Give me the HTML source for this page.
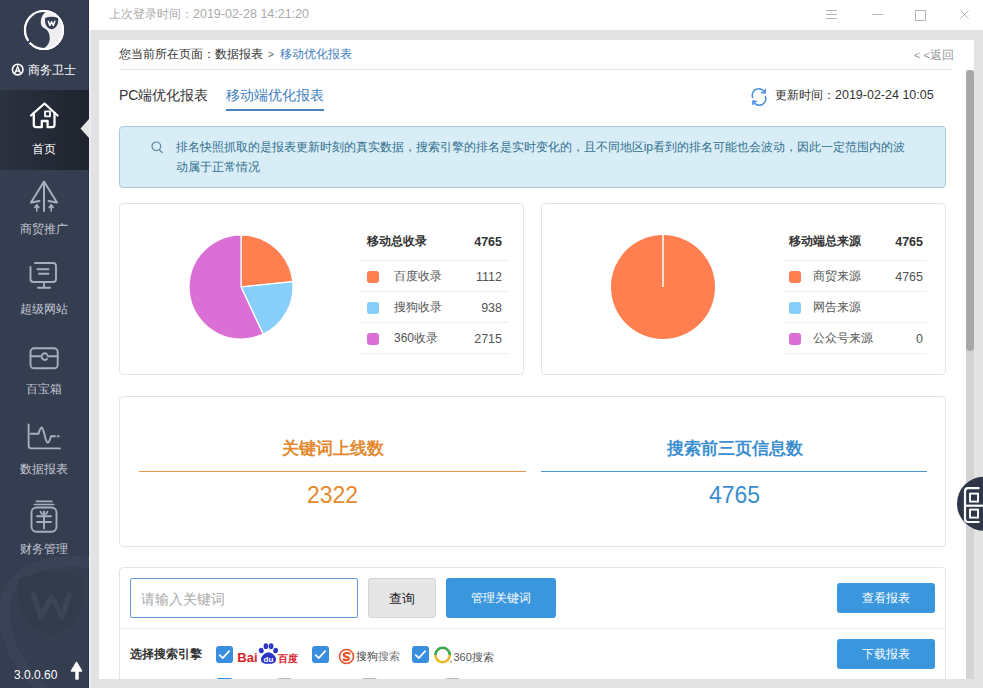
<!DOCTYPE html>
<html><head><meta charset="utf-8">
<style>
*{margin:0;padding:0;box-sizing:border-box}
html,body{width:983px;height:688px;overflow:hidden;background:#e3e3e3;font-family:"Liberation Sans",sans-serif;color:#333;position:relative}
.abs{position:absolute}
#side{left:0;top:0;width:89px;height:688px;background:#353d50;border-right:1px solid #2f3441}
#topbar{left:89px;top:0;width:894px;height:30px;background:#fff}
#strip{left:89px;top:30px;width:2px;height:658px;background:#e9ecf3}
#panel{left:99px;top:40px;width:875px;height:639px;background:#fff;overflow:hidden}
.nav{position:absolute;left:0;width:89px;height:80px;text-align:center}
.nav .t{position:absolute;left:0;width:89px;top:52px;font-size:12px;line-height:14px;color:#c9ced8}
.nav svg{position:absolute;left:29px;top:10px}
.txt{position:absolute;white-space:nowrap;line-height:1}
.card{position:absolute;border:1px solid #e5e5e5;border-radius:4px;background:#fff}
.row{position:absolute;left:0;width:148px;height:31px;border-top:1px solid #eee}
.sq{position:absolute;left:7px;top:10px;width:12px;height:12px;border-radius:3px}
.lbl{position:absolute;left:34px;top:8px;font-size:12px;color:#555;line-height:14px}
.num{position:absolute;right:6px;top:9px;color:#555;line-height:14px}
.dg{font-size:12.5px}
.btn{position:absolute;border-radius:3px;text-align:center;color:#fff;background:#3598dc}
.cb{position:absolute;width:17px;height:17px;border-radius:3px;background:#3a8ee0}
</style></head><body>
<div id="side" class="abs">
<svg class="abs" style="left:0;top:0" width="89" height="90" viewBox="0 0 89 90">
 <circle cx="44" cy="30" r="20.1" fill="#efeff2"/>
 <circle cx="44" cy="30" r="19.1" fill="none" stroke="#fff" stroke-width="2"/>
 <path d="M45.5 11.95 A18.1 18.1 0 1 0 44 48.1 C52.5 43.5 51 31 44 28 C39.5 26 39.5 17 45.5 11.95 Z" fill="#353d50"/>
 <path d="M31.5 39.8 L26.2 43.8" stroke="#353d50" stroke-width="2.3"/>
 <path d="M45.2 18 Q51.6 15.6 58 18 C59 23.5 56.5 28.5 51.6 29.2 C46.7 28.5 44.2 23.5 45.2 18 Z" fill="#353d50"/>
 <path d="M48.2 20.8 L49.9 25.5 L51.6 21.8 L53.3 25.5 L55 20.8" fill="none" stroke="#fff" stroke-width="1.5" stroke-linejoin="round"/>
 <circle cx="17.7" cy="69.6" r="5.3" fill="none" stroke="#fff" stroke-width="1.6"/>
 <path d="M15.1 73 L17.7 66.4 L20.3 73 M16.1 71 L19.3 71" fill="none" stroke="#fff" stroke-width="1.4"/>
</svg>
<div class="txt" style="left:28px;top:63.5px;font-size:12px;color:#fff">商务卫士</div>
<div class="abs" style="left:0;top:90px;width:89px;height:80px;background:linear-gradient(to right,#2b3240,#1f232e)"></div>
<svg class="abs" style="left:80px;top:119px" width="9" height="19"><path d="M9 0 L0.5 9.5 L9 19Z" fill="#e4e4e4"/></svg>
<svg class="abs" style="left:0;top:90px" width="89" height="490" viewBox="0 90 89 490" fill="none" stroke-linecap="round" stroke-linejoin="round">
 <g stroke="#fff" stroke-width="2.3">
  <path d="M31 115.5 L44.5 103.5 L57.5 115.5"/>
  <path d="M33.8 113 V124.8 Q33.8 127.2 36.2 127.2 H41.8 V121 H47.6 V127.2 H52.1 Q54.5 127.2 54.5 124.8 V113"/>
  <rect x="45" y="111.3" width="5" height="5" stroke-width="1.8"/>
 </g>
 <g stroke="#a7afbe" stroke-width="2">
  <path d="M39.5 201 L31 202.5 L44 181.5 L57 202.5 L48.5 201"/>
  <path d="M44 184 V211"/>
  <path d="M36.8 206 V211 M34.8 207.5 L36.8 204.8 L38.8 207.5 M51.2 206 V211 M49.2 207.5 L51.2 204.8 L53.2 207.5" stroke-width="1.6"/>
 </g>
 <g stroke="#a7afbe" stroke-width="1.9">
  <path d="M35 263 H53 Q56 263 56 266 V279 Q56 282 53 282 H33.5 Q30.5 282 30.5 279 V267"/>
  <path d="M37.5 269.3 H48.5 M39 273.8 H48.5 M44 282.5 V287.5 M38 287.8 H50"/>
 </g>
 <g stroke="#a7afbe" stroke-width="1.9">
  <rect x="30.5" y="348.3" width="27.2" height="20" rx="3.5"/>
  <path d="M30.5 356.3 H40 M47.5 356.3 H57.7"/>
  <path d="M47 354.3 A3.2 3.2 0 1 0 47 359"/>
 </g>
 <g stroke="#a7afbe" stroke-width="1.9">
  <path d="M28.6 424.5 V445.5 Q28.6 448.4 31.5 448.4 H60"/>
  <path d="M30.5 433.8 H38.5 Q40.5 427 41.8 427.5 Q43 428 45.5 438.5 Q46.8 443 48 442.5 Q49.5 442 51 436.3 H55"/>
  <path d="M57.6 436.3 H58.6"/>
 </g>
 <g stroke="#a7afbe" stroke-width="1.9">
  <path d="M36.4 501.4 H52 M34.4 504.5 H53.8" stroke-width="1.6"/>
  <rect x="31.5" y="507.5" width="25" height="24.3" rx="5"/>
  <path d="M37 516.2 H51 M37 522 H51 M44 511.5 V528.5 M40.5 511.8 L42 514 M47.5 511.8 L46 514"/>
 </g>
</svg>
<div class="txt" style="left:-0.5px;width:89px;text-align:center;top:142.5px;font-size:12px;color:#fff">首页</div>
<div class="txt" style="left:-0.5px;width:89px;text-align:center;top:222.5px;font-size:12px;color:#c3c8d2">商贸推广</div>
<div class="txt" style="left:-0.5px;width:89px;text-align:center;top:302.5px;font-size:12px;color:#c3c8d2">超级网站</div>
<div class="txt" style="left:-0.5px;width:89px;text-align:center;top:382.5px;font-size:12px;color:#c3c8d2">百宝箱</div>
<div class="txt" style="left:-0.5px;width:89px;text-align:center;top:462.5px;font-size:12px;color:#c3c8d2">数据报表</div>
<div class="txt" style="left:-0.5px;width:89px;text-align:center;top:542.5px;font-size:12px;color:#c3c8d2">财务管理</div>
<svg class="abs" style="left:0;top:554px" width="89" height="134" viewBox="0 554 89 134">
 <path d="M95 563 C60 558 14 562 5 602 C1 632 15 665 45 692" fill="none" stroke="#3a4256" stroke-width="11"/>
 <path d="M18.3 580 Q50 564 82.8 580 V598 Q81 624 50.5 636 Q20 624 18.3 598 Z" fill="#323a4c"/>
 <path d="M33 592.5 L41 617 L51.5 597 L62 617 L70 592.5" fill="none" stroke="#3c4457" stroke-width="5.5" stroke-linejoin="round"/>
 <path d="M76 679 V671 H71.5 L76.5 662.5 L81.5 671 H78 V679 Z" fill="#fff" stroke="#fff" stroke-width="1.5" stroke-linejoin="round"/>
</svg>
<div class="txt" style="left:14px;top:669px;font-size:12px;color:#fff">3.0.0.60</div>
</div>
<div id="topbar" class="abs">
<div class="txt" style="left:20px;top:8px;font-size:12px;color:#aaa">上次登录时间：<span class="dg">2019-02-28 14:21:20</span></div>
<svg class="abs" style="left:735px;top:8px" width="150" height="15" fill="none" stroke="#b5b5b5" stroke-width="1">
 <path d="M2 2.5 H13 M2 6.5 H13 M2 10.5 H13"/>
 <path d="M48 6.5 H59"/>
</svg>
<svg class="abs" style="left:820px;top:8px" width="74" height="15" fill="none" stroke="#b5b5b5" stroke-width="1">
 <rect x="6.5" y="2.5" width="10" height="10"/>
 <path d="M51.5 2.5 L59.5 10.5 M59.5 2.5 L51.5 10.5"/>
</svg>
</div>
<div id="strip" class="abs"></div>
<div id="panel" class="abs">
<div class="txt" style="left:20px;top:8px;font-size:12px;color:#333">您当前所在页面：数据报表<span style="font-size:10px;color:#666;margin:0 6.5px 0 5px">&gt;</span><span style="color:#3f7ec0">移动优化报表</span></div>
<div class="txt" style="right:20px;top:9px;font-size:12px;color:#999"><span style="font-size:11px">&lt; &lt;</span>返回</div>
<div class="abs" style="left:20px;top:29px;width:834px;height:1px;background:#e6e6e6"></div>
<div class="abs" style="left:867px;top:30px;width:8px;height:609px;background:#d4d4d4"></div>
<div class="abs" style="left:867px;top:30px;width:8px;height:281px;background:#a7a7a7;border-radius:4px"></div>
<div class="txt" style="left:20px;top:48px;font-size:14px;color:#333">PC端优化报表</div>
<div class="txt" style="left:127px;top:48px;font-size:14px;color:#3f7ec0">移动端优化报表</div>
<div class="abs" style="left:127px;top:69px;width:98px;height:2px;background:#4a80c0"></div>
<svg class="abs" style="left:652px;top:47.5px" width="18" height="18" viewBox="0 0 18 18" fill="none" stroke="#4a90e0" stroke-width="1.5" stroke-linecap="round" stroke-linejoin="round">
 <path d="M1.6 9.6 A6.6 6.6 0 0 1 13.8 4.6"/><path d="M14.4 8.4 A6.6 6.6 0 0 1 2.2 13.4"/>
 <path d="M14.2 1.6 L13.9 4.9 L10.6 4.5"/><path d="M1.8 16.4 L2.1 13.1 L5.4 13.5"/>
</svg>
<div class="txt" style="left:676px;top:49px;font-size:12px;color:#333">更新时间：<span class="dg">2019-02-24 10:05</span></div>
<div class="abs" style="left:20px;top:86px;width:827px;height:62px;background:#d9edf7;border:1px solid #a8cbdc;border-radius:4px"></div>
<svg class="abs" style="left:52px;top:101px" width="13" height="13" viewBox="0 0 13 13" fill="none" stroke="#5d8699" stroke-width="1.2"><circle cx="5.3" cy="5.3" r="4.3"/><path d="M8.4 8.6 L11.5 12"/></svg>
<div class="abs" style="left:76.7px;top:97px;width:738px;font-size:12px;line-height:20px;color:#31708f">排名快照抓取的是报表更新时刻的真实数据，搜索引擎的排名是实时变化的，且不同地区ip看到的排名可能也会波动，因此一定范围内的波动属于正常情况</div>

<div class="card" style="left:20px;top:163px;width:405px;height:172px">
<svg class="abs" style="left:61px;top:22.5px" width="120" height="120"><path d="M60 60 L60.00 8.00 A52 52 0 0 1 111.72 54.58 Z" fill="#ff7f50" stroke="#fff" stroke-width="1.2" stroke-linejoin="round"/><path d="M60 60 L111.72 54.58 A52 52 0 0 1 82.08 107.08 Z" fill="#87cefa" stroke="#fff" stroke-width="1.2" stroke-linejoin="round"/><path d="M60 60 L82.08 107.08 A52 52 0 1 1 60.00 8.00 Z" fill="#da70d6" stroke="#fff" stroke-width="1.2" stroke-linejoin="round"/></svg>
<div class="abs" style="left:240px;top:0;width:148px;height:172px">
 <div class="txt" style="left:7px;top:31px;font-size:12px;font-weight:bold;color:#333">移动总收录</div>
 <div class="txt dg" style="right:6px;top:32px;font-weight:bold;color:#333">4765</div>
 <div class="row" style="top:56px;width:148px"><div class="sq" style="left:7px;top:9.5px;background:#ff7f50"></div><div class="lbl" style="left:34px">百度收录</div><div class="num dg" style="right:6px">1112</div></div>
 <div class="row" style="top:87px;width:148px"><div class="sq" style="left:7px;top:9.5px;background:#87cefa"></div><div class="lbl" style="left:34px">搜狗收录</div><div class="num dg" style="right:6px">938</div></div>
 <div class="row" style="top:118px;width:148px"><div class="sq" style="left:7px;top:9.5px;background:#da70d6"></div><div class="lbl" style="left:34px">360收录</div><div class="num dg" style="right:6px">2715</div></div>
 <div class="row" style="top:149px;height:1px;width:148px"></div>
</div>
</div>
<div class="card" style="left:442px;top:163px;width:405px;height:172px">
<svg class="abs" style="left:61px;top:22.5px" width="120" height="120"><circle cx="60" cy="60" r="52" fill="#ff7f50"/><path d="M60 60 V8" stroke="#fff" stroke-width="1.5"/></svg>
<div class="abs" style="left:242px;top:0;width:143px;height:172px">
 <div class="txt" style="left:5px;top:31px;font-size:12px;font-weight:bold;color:#333">移动端总来源</div>
 <div class="txt dg" style="right:4px;top:32px;font-weight:bold;color:#333">4765</div>
 <div class="row" style="top:56px;width:143px"><div class="sq" style="left:5px;top:9.5px;background:#ff7f50"></div><div class="lbl" style="left:29px">商贸来源</div><div class="num dg" style="right:4px">4765</div></div>
 <div class="row" style="top:87px;width:143px"><div class="sq" style="left:5px;top:9.5px;background:#87cefa"></div><div class="lbl" style="left:29px">网告来源</div></div>
 <div class="row" style="top:118px;width:143px"><div class="sq" style="left:5px;top:9.5px;background:#da70d6"></div><div class="lbl" style="left:29px">公众号来源</div><div class="num dg" style="right:4px">0</div></div>
 <div class="row" style="top:149px;height:1px;width:143px"></div>
</div>
</div>
<div class="card" style="left:20px;top:356px;width:827px;height:151px">
 <div class="txt" style="left:19px;width:387px;text-align:center;top:43px;font-size:16.5px;font-weight:bold;color:#e4892f">关键词上线数</div>
 <div class="abs" style="left:19px;top:74px;width:387px;height:1px;background:#e8964a"></div>
 <div class="txt" style="left:19px;width:387px;text-align:center;top:87px;font-size:23px;color:#e4892f">2322</div>
 <div class="txt" style="left:421px;width:387px;text-align:center;top:43px;font-size:16.5px;font-weight:bold;color:#3a8ed0">搜索前三页信息数</div>
 <div class="abs" style="left:421px;top:74px;width:386px;height:1px;background:#4a95d4"></div>
 <div class="txt" style="left:421px;width:387px;text-align:center;top:87px;font-size:23px;color:#3a8ed0">4765</div>
</div>
<div class="card" style="left:20px;top:527px;width:827px;height:200px;border-radius:4px 4px 0 0">
 <div class="abs" style="left:10px;top:10px;width:228px;height:40px;border:1px solid #6b98d6;border-radius:2px"></div>
 <div class="txt" style="left:21px;top:23.5px;font-size:14px;color:#aaa">请输入关键词</div>
 <div class="abs" style="left:248px;top:10px;width:68px;height:40px;border:1px solid #d4d4d4;border-radius:3px;background:#e6e6e6"></div>
 <div class="txt" style="left:248px;width:68px;text-align:center;top:24px;font-size:13px;color:#222">查询</div>
 <div class="btn" style="left:326px;top:10px;width:110px;height:40px;background:#3a96dd"></div>
 <div class="txt" style="left:326px;width:110px;text-align:center;top:24px;font-size:12px;color:#fff">管理关键词</div>
 <div class="btn" style="left:717px;top:15px;width:98px;height:30px;background:#3a96dd"></div>
 <div class="txt" style="left:717px;width:98px;text-align:center;top:24px;font-size:12px;color:#fff">查看报表</div>
 <div class="abs" style="left:0;top:60px;width:825px;height:1px;background:#eee"></div>
 <div class="btn" style="left:717px;top:71px;width:98px;height:30px;background:#3a96dd"></div>
 <div class="txt" style="left:717px;width:98px;text-align:center;top:80px;font-size:12px;color:#fff">下载报表</div>
 <div class="txt" style="left:10px;top:80px;font-size:12px;font-weight:bold;color:#333">选择搜索引擎</div>
 <div class="cb" style="left:96px;top:78px"><svg width="17" height="17" viewBox="0 0 17 17"><path d="M3.2 8.6 L6.8 12 L13.6 4.6" fill="none" stroke="#fff" stroke-width="1.7"/></svg></div>
 <div class="cb" style="left:192px;top:78px"><svg width="17" height="17" viewBox="0 0 17 17"><path d="M3.2 8.6 L6.8 12 L13.6 4.6" fill="none" stroke="#fff" stroke-width="1.7"/></svg></div>
 <div class="cb" style="left:292px;top:78px"><svg width="17" height="17" viewBox="0 0 17 17"><path d="M3.2 8.6 L6.8 12 L13.6 4.6" fill="none" stroke="#fff" stroke-width="1.7"/></svg></div>
 <svg class="abs" style="left:117px;top:74px" width="62" height="23" viewBox="237 642 62 23">
  <text x="237.3" y="662" font-family="Liberation Sans" font-weight="bold" font-size="13" fill="#d9232a">Bai</text>
  <g fill="#2b36c9"><ellipse cx="261.3" cy="650.6" rx="2.4" ry="2.7" transform="rotate(-20 261.3 650.6)"/><ellipse cx="265.9" cy="646.2" rx="2.3" ry="2.9"/><ellipse cx="271.1" cy="646.2" rx="2.3" ry="2.9"/><ellipse cx="275.6" cy="650.6" rx="2.4" ry="2.7" transform="rotate(20 275.6 650.6)"/>
  <path d="M261.2 661 Q260 657 264.5 653.8 Q268.5 650.5 272.5 653.8 Q277 657 275.8 661 Q275 664 268.5 663.8 Q262 664 261.2 661Z"/></g>
  <text x="268.5" y="662.3" font-family="Liberation Sans" font-weight="bold" font-size="8" fill="#fff" text-anchor="middle">du</text>
 </svg>
 <div class="txt" style="left:157.5px;top:85.5px;font-size:10px;font-weight:bold;color:#d9232a">百度</div>
 <svg class="abs" style="left:218px;top:80px" width="17" height="17" viewBox="0 0 17 17"><circle cx="8.5" cy="8.5" r="7" fill="#fff" stroke="#e5532b" stroke-width="1.6"/><path d="M11.5 5.6 Q9.5 4.3 7.3 5.2 Q5 6.2 6.4 8 Q7.4 8.7 9.3 9 Q11.5 9.6 10.5 11.4 Q9 12.8 5.6 11.6" fill="none" stroke="#e5532b" stroke-width="2.2" stroke-linecap="round"/></svg>
 <div class="txt" style="left:235.5px;top:82.5px;font-size:11px;color:#444">搜狗<span style="color:#777">搜索</span></div>
 <svg class="abs" style="left:314px;top:78px" width="19" height="19" viewBox="0 0 19 19"><path d="M1.4 9 A7.2 7.2 0 0 1 15.8 9" fill="none" stroke="#3ba84a" stroke-width="2.6"/><path d="M15.8 9 A7.2 7.2 0 0 1 1.4 9" fill="none" stroke="#e9b62c" stroke-width="2.6"/><circle cx="17" cy="15.8" r="0.9" fill="#8a9a3a"/></svg>
 <div class="txt" style="left:333.5px;top:83.5px;font-size:11px;color:#555">360搜索</div>
 <div class="txt" style="left:10px;top:112px;font-size:12px;font-weight:bold;color:#333">选择效果网站</div>
 <div class="cb" style="left:96px;top:110px"></div>
 <div class="txt" style="left:120px;top:112px;font-size:12px;color:#555">商贸</div>
 <div class="abs" style="left:156px;top:110px;width:17px;height:17px;border:1px solid #bbb;border-radius:3px"></div>
 <div class="txt" style="left:180px;top:112px;font-size:12px;color:#555">企业官网</div>
 <div class="abs" style="left:241px;top:110px;width:17px;height:17px;border:1px solid #bbb;border-radius:3px"></div>
 <div class="txt" style="left:265px;top:112px;font-size:12px;color:#555">微信官网</div>
 <div class="abs" style="left:324px;top:110px;width:17px;height:17px;border:1px solid #bbb;border-radius:3px"></div>
 <div class="txt" style="left:348px;top:112px;font-size:12px;color:#555">其他</div>
</div>
</div>
</div>
<svg class="abs" style="left:955px;top:474px" width="28" height="60" viewBox="955 474 28 60">
 <circle cx="984" cy="503.7" r="27" fill="#2e3648"/>
 <g fill="none" stroke="#fff" stroke-width="2.2">
  <path d="M979.5 488.2 H968 Q965 488.2 965 491.2 V519 Q965 522 968 522 H979.5"/>
  <path d="M965 505.7 H983"/>
  <rect x="970" y="493.6" width="8" height="8" stroke-width="1.9"/>
  <rect x="970" y="509.6" width="8" height="8" stroke-width="1.9"/>
 </g>
</svg>
</body></html>
